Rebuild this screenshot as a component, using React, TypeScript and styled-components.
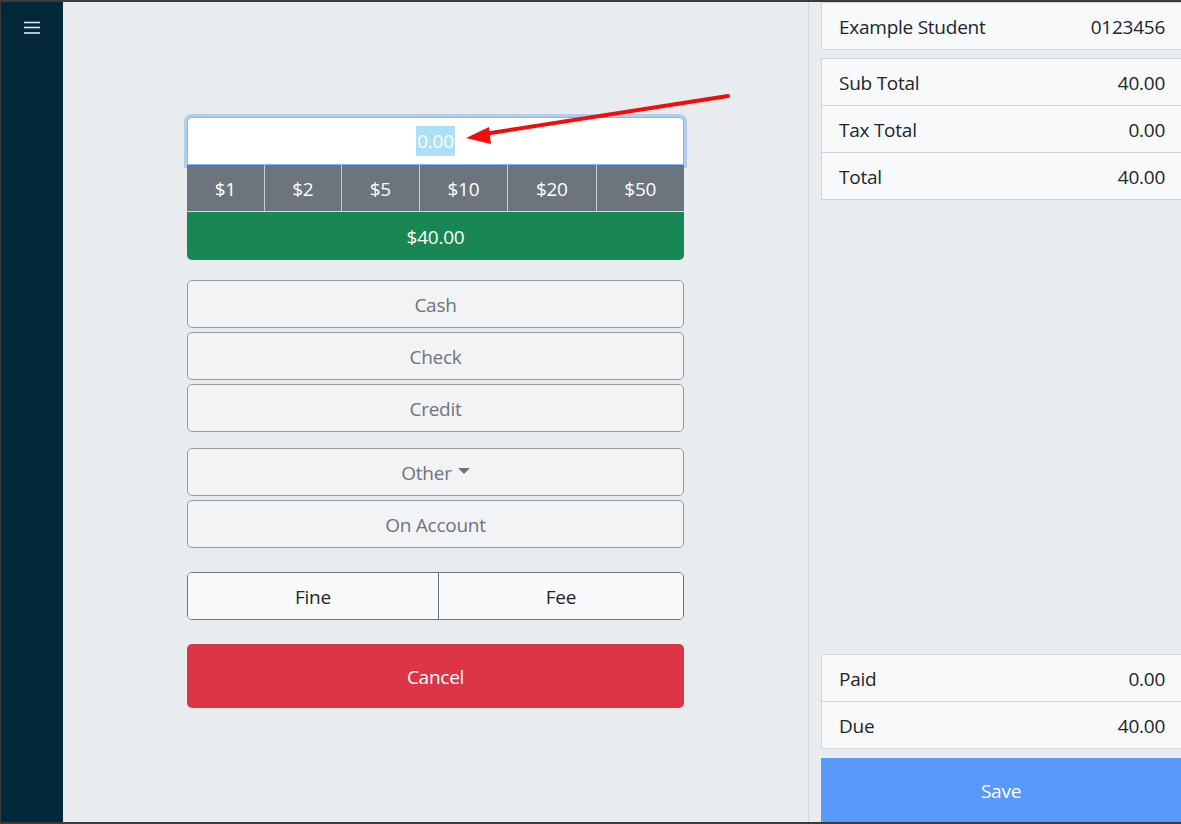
import React from "react";
import styled, { createGlobalStyle } from "styled-components";

const GlobalStyle = createGlobalStyle`
  html, body {
    margin: 0;
    padding: 0;
    background: #3b3b3b;
  }
  body {
    font-family: "Open Sans", "Noto Sans", "Liberation Sans", sans-serif;
    font-size: 19px;
    letter-spacing: -0.25px;
    color: #212529;
  }
  button {
    letter-spacing: inherit;
    padding: 2px 0 0;
  }
  * {
    box-sizing: border-box;
  }
`;

const Frame = styled.div`
  position: relative;
  display: flex;
  width: 1181px;
  height: 824px;
  border-top: 2px solid #3b3b3b;
  border-left: 1px solid #3b3b3b;
  border-bottom: 2px solid #3b3b3b;
  overflow: hidden;
`;

const Sidebar = styled.nav`
  width: 62px;
  flex-shrink: 0;
  background: #02263a;
  padding: 17px 0 0 22px;
`;

const MenuButton = styled.button`
  display: block;
  width: 18px;
  height: 18px;
  padding: 0;
  border: none;
  background: none;
  cursor: pointer;
`;

const Main = styled.main`
  width: 746px;
  flex-shrink: 0;
  background: #e9ecef;
  border-right: 1px solid #d3d7db;
  display: flex;
  justify-content: center;
  padding-top: 115px;
`;

const Form = styled.div`
  width: 497px;
  display: flex;
  flex-direction: column;
`;

const AmountInput = styled.div`
  position: relative;
  height: 48px;
  background: #fff;
  border: 1px solid #86b7fe;
  border-radius: 5px 5px 0 0;
  box-shadow: 0 0 0 3px rgba(13, 110, 253, 0.25);
  display: flex;
  align-items: center;
  justify-content: center;
`;

const Selected = styled.span`
  background: #addff7;
  color: #fff;
  line-height: 30px;
  padding: 0 1px;
`;

const QuickRow = styled.div`
  position: relative;
  display: flex;
  height: 47px;
  border-bottom: 1px solid #d6d9dc;
`;

const QuickButton = styled.button<{ $wide?: boolean }>`
  flex: ${(p) => (p.$wide ? "88" : "77")} 1 0;
  border: none;
  border-left: 1px solid #c9ccd0;
  background: #6c757d;
  color: #fff;
  font: inherit;
  &:first-child {
    border-left: none;
  }
`;

const TotalButton = styled.button`
  height: 48px;
  border: none;
  border-radius: 0 0 5px 5px;
  background: #198754;
  color: #fff;
  font: inherit;
  margin-bottom: 20px;
`;

const Group = styled.div<{ $space?: number }>`
  display: flex;
  flex-direction: column;
  gap: 4px;
  margin-bottom: ${(p) => p.$space ?? 0}px;
`;

const OptionButton = styled.button`
  height: 48px;
  border: 1px solid #969ba0;
  border-radius: 5px;
  background: #f2f3f5;
  color: #6c757d;
  font: inherit;
  display: flex;
  align-items: center;
  justify-content: center;
  gap: 6px;
`;

const Caret = styled.span`
  width: 0;
  height: 0;
  border-left: 6px solid transparent;
  border-right: 6px solid transparent;
  border-top: 6px solid #6c757d;
  margin-top: -4px;
`;

const SplitRow = styled.div`
  display: flex;
  height: 48px;
  border: 1px solid #6c757d;
  border-radius: 5px;
  overflow: hidden;
  margin-bottom: 24px;
`;

const SplitButton = styled.button<{ $grow: number }>`
  flex: ${(p) => p.$grow} 1 0;
  border: none;
  background: #f8f9fa;
  color: #212529;
  font: inherit;
  & + & {
    border-left: 1px solid #6c757d;
  }
`;

const CancelButton = styled.button`
  height: 64px;
  border: none;
  border-radius: 5px;
  background: #dc3545;
  color: #fff;
  font: inherit;
`;

const Summary = styled.aside`
  flex: 1;
  background: #e9ecef;
  padding-left: 12px;
  display: flex;
  flex-direction: column;
  justify-content: space-between;
`;

const Stack = styled.div<{ $gap: number }>`
  display: flex;
  flex-direction: column;
  gap: ${(p) => p.$gap}px;
`;

const Card = styled.ul`
  list-style: none;
  margin: 0;
  padding: 0;
  background: #f8f9fa;
  border: 1px solid #d2d6da;
  border-right: none;
`;

const Row = styled.li`
  display: flex;
  justify-content: space-between;
  align-items: center;
  height: 46px;
  padding: 2px 16px 0 17px;
  & + & {
    border-top: 1px solid #d2d6da;
    height: 47px;
  }
`;

const SaveButton = styled.button`
  height: 64px;
  border: none;
  background: #5899fa;
  color: #fff;
  font: inherit;
`;

const Annotation = styled.svg`
  position: absolute;
  top: -2px;
  left: -1px;
  pointer-events: none;
`;

const quick = ["$1", "$2", "$5", "$10", "$20", "$50"];

const App: React.FC = () => {
  return (
    <>
      <GlobalStyle />
      <Frame>
        <Sidebar>
          <MenuButton aria-label="menu">
            <svg width="18" height="18" viewBox="0 0 18 18">
              <g stroke="#e4e9ec" strokeWidth="1.6">
                <line x1="1" y1="3.5" x2="17" y2="3.5" />
                <line x1="1" y1="8.5" x2="17" y2="8.5" />
                <line x1="1" y1="14" x2="17" y2="14" />
              </g>
            </svg>
          </MenuButton>
        </Sidebar>

        <Main>
          <Form>
            <AmountInput>
              <Selected>0.00</Selected>
            </AmountInput>
            <QuickRow>
              {quick.map((q) => (
                <QuickButton key={q} $wide={q.length > 2}>
                  {q}
                </QuickButton>
              ))}
            </QuickRow>
            <TotalButton>$40.00</TotalButton>

            <Group $space={16}>
              <OptionButton>Cash</OptionButton>
              <OptionButton>Check</OptionButton>
              <OptionButton>Credit</OptionButton>
            </Group>

            <Group $space={24}>
              <OptionButton>
                Other <Caret />
              </OptionButton>
              <OptionButton>On Account</OptionButton>
            </Group>

            <SplitRow>
              <SplitButton $grow={251}>Fine</SplitButton>
              <SplitButton $grow={245}>Fee</SplitButton>
            </SplitRow>

            <CancelButton>Cancel</CancelButton>
          </Form>
        </Main>

        <Summary>
          <Stack $gap={8}>
            <Card>
              <Row>
                <span>Example Student</span>
                <span>0123456</span>
              </Row>
            </Card>
            <Card>
              <Row>
                <span>Sub Total</span>
                <span>40.00</span>
              </Row>
              <Row>
                <span>Tax Total</span>
                <span>0.00</span>
              </Row>
              <Row>
                <span>Total</span>
                <span>40.00</span>
              </Row>
            </Card>
          </Stack>
          <Stack $gap={9}>
            <Card>
              <Row>
                <span>Paid</span>
                <span>0.00</span>
              </Row>
              <Row>
                <span>Due</span>
                <span>40.00</span>
              </Row>
            </Card>
            <SaveButton>Save</SaveButton>
          </Stack>
        </Summary>

        <Annotation width="1181" height="824" viewBox="0 0 1181 824">
          <line
            x1="728"
            y1="96"
            x2="484"
            y2="134"
            stroke="#f20d0d"
            strokeWidth="4"
            strokeLinecap="round"
          />
          <polygon points="466,138 489,127 491,144" fill="#f20d0d" />
        </Annotation>
      </Frame>
    </>
  );
};

export default App;
